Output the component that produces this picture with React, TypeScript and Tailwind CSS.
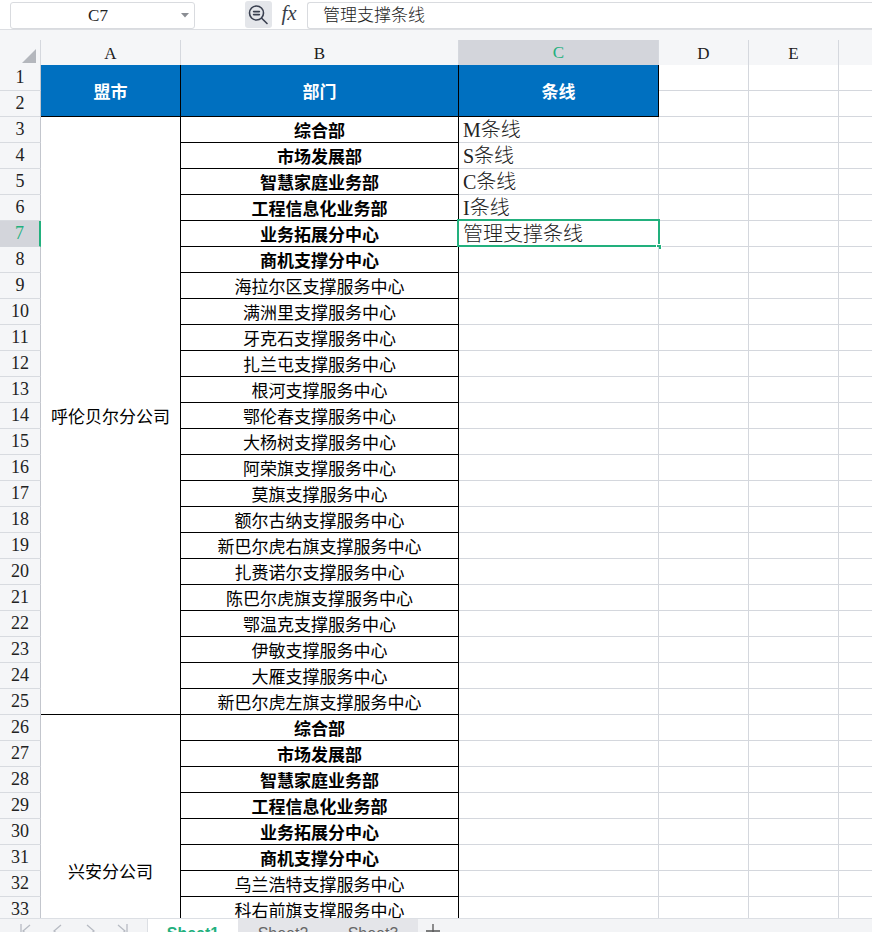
import React from 'react';

const GRID = 'grid grid-cols-[41px_140px_278px_200px_90px_90px_90px] w-max';
const SERIF = "font-['Liberation_Serif','Noto_Sans_CJK_SC',serif]";
const SANS = "font-['Noto_Sans_CJK_SC',sans-serif]";

const HQ = ['综合部', '市场发展部', '智慧家庭业务部', '工程信息化业务部', '业务拓展分中心', '商机支撑分中心'];

const hulunbuir = [
  '海拉尔区支撑服务中心',
  '满洲里支撑服务中心',
  '牙克石支撑服务中心',
  '扎兰屯支撑服务中心',
  '根河支撑服务中心',
  '鄂伦春支撑服务中心',
  '大杨树支撑服务中心',
  '阿荣旗支撑服务中心',
  '莫旗支撑服务中心',
  '额尔古纳支撑服务中心',
  '新巴尔虎右旗支撑服务中心',
  '扎赉诺尔支撑服务中心',
  '陈巴尔虎旗支撑服务中心',
  '鄂温克支撑服务中心',
  '伊敏支撑服务中心',
  '大雁支撑服务中心',
  '新巴尔虎左旗支撑服务中心',
];

const xingan = ['乌兰浩特支撑服务中心', '科右前旗支撑服务中心', '科右中旗支撑服务中心', '扎赉特旗支撑服务中心', '突泉支撑服务中心', '阿尔山支撑服务中心'];

const depts = [
  ...HQ.map((name) => ({ name, bold: true })),
  ...hulunbuir.map((name) => ({ name, bold: false })),
  ...HQ.map((name) => ({ name, bold: true })),
  ...xingan.map((name) => ({ name, bold: false })),
];

const lines: Record<number, string> = { 3: 'M条线', 4: 'S条线', 5: 'C条线', 6: 'I条线', 7: '管理支撑条线' };

const GREEN = '#22b07d';
const TOTAL_ROWS = 37;

function TopBar() {
  return (
    <div className="h-[30px] bg-white border-b border-[#dcdee2] flex items-start shrink-0">
      <div className="ml-[10px] mt-[2px] w-[185px] h-[27px] border border-[#d9dbdf] rounded-[3px] flex items-center bg-white">
        <span className={`flex-1 text-center pl-[4px] text-[17px] text-[#222] ${SERIF}`}>C7</span>
        <svg width="8" height="5" viewBox="0 0 8 5" className="mr-[5px]">
          <path d="M0 0 L8 0 L4 4.5 Z" fill="#8a8d93" />
        </svg>
      </div>
      <div className="ml-[50px] mt-[1px] w-[27px] h-[27px] rounded-[3px] bg-[#e4e6ea] flex items-center justify-center">
        <svg width="27" height="27" viewBox="0 0 27 27" fill="none" stroke="#3a4050" strokeWidth="1.6" strokeLinecap="round">
          <circle cx="11.5" cy="12" r="7" />
          <path d="M16.7 17.2 L22 22.5" />
          <path d="M8.6 10.6 H14.4 M8.6 13.6 H14.4" />
        </svg>
      </div>
      <div className={`ml-[7px] w-[20px] h-[28px] flex items-center justify-center italic text-[21px] text-[#3a3f4a] ${SERIF}`}>
        fx
      </div>
      <div className="ml-[8px] mt-[2px] flex-1 h-[27px] border border-r-0 border-[#d9dbdf] rounded-l-[3px] flex items-center pl-[15px] bg-white">
        <span className={`text-[17px] text-[#222] font-light ${SERIF}`}>管理支撑条线</span>
      </div>
    </div>
  );
}

function ColumnHeaders() {
  const letters = ['A', 'B', 'C', 'D', 'E', 'F'];
  return (
    <div className="bg-[#f5f6f8] pt-[10px] shrink-0">
      <div className={`${GRID} h-[25px]`}>
        <div className="border-r border-b border-r-[#d5d8de] border-b-[#c3c6cd] flex items-end justify-end pr-[4px] pb-[4px]">
          <svg width="14" height="14" viewBox="0 0 14 14">
            <path d="M14 0 L14 14 L0 14 Z" fill="#b4b7bd" />
          </svg>
        </div>
        {letters.map((l) =>
          l === 'C' ? (
            <div
              key={l}
              className={`bg-[#d3d5db] border-r border-r-[#d5d8de] border-b-2 border-b-[#22b07d] flex items-center justify-center text-[17px] text-[#22b07d] ${SERIF}`}
            >
              {l}
            </div>
          ) : (
            <div
              key={l}
              className={`border-r border-b border-r-[#d5d8de] border-b-[#c3c6cd] flex items-center justify-center text-[17px] text-[#1c1c1c] ${SERIF}`}
            >
              {l}
            </div>
          )
        )}
      </div>
    </div>
  );
}

function RowHeader({ n }: { n: number }) {
  if (n === 7) {
    return (
      <div className={`col-start-1 bg-[#d3d5db] border-r-2 border-r-[#22b07d] border-b border-b-[#d3d6dc] flex items-center justify-center text-[18px] text-[#22b07d] ${SERIF}`}>
        {n}
      </div>
    );
  }
  return (
    <div className={`col-start-1 bg-[#f5f6f8] border-r border-b border-r-[#c3c6cd] border-b-[#d8dbe0] flex items-center justify-center text-[18px] text-[#222] ${SERIF}`}>
      {n}
    </div>
  );
}

function Blank() {
  return <div className="border-r border-b border-[#d4d7dd] bg-white" />;
}

function Sheet() {
  const cells: React.ReactNode[] = [];
  for (let r = 1; r <= TOTAL_ROWS; r++) {
    cells.push(<RowHeader key={`h${r}`} n={r} />);
    if (r === 1) {
      ['盟市', '部门', '条线'].map((t) =>
        cells.push(
          <div
            key={t}
            className={`row-span-2 bg-[#0070c0] border-r border-b border-black flex items-center justify-center text-white font-bold text-[17px] ${SANS}`}
          >
            {t}
          </div>
        )
      );
    }
    if (r === 3 || r === 26) {
      cells.push(
        <div
          key={`a${r}`}
          className={`${r === 3 ? 'row-span-23' : 'row-span-12'} bg-white border-r border-b border-black flex items-center justify-center text-[17px] text-black ${SANS}`}
        >
          {r === 3 ? '呼伦贝尔分公司' : '兴安分公司'}
        </div>
      );
    }
    if (r >= 3) {
      const d = depts[r - 3];
      cells.push(
        <div
          key={`b${r}`}
          className={`bg-white border-r border-b border-black flex items-center justify-center text-[17px] text-black ${d.bold ? 'font-bold' : ''} ${SANS}`}
        >
          {d.name}
        </div>
      );
      cells.push(
        <div key={`c${r}`} className="relative bg-white border-r border-b border-[#d4d7dd] flex items-center pl-[4px]">
          <span className={`text-[20px] leading-none text-[#222] font-light ${SERIF}`}>{lines[r] ?? ''}</span>
          {r === 7 && (
            <>
              <div className="absolute -left-[2px] -top-[2px] -right-[2px] -bottom-[1px] border-2 border-[#22b07d]" />
              <div className="absolute -right-[4px] -bottom-[4px] w-[6px] h-[6px] bg-[#22b07d] border border-white" />
            </>
          )}
        </div>
      );
    }
    cells.push(<Blank key={`d${r}`} />, <Blank key={`e${r}`} />, <Blank key={`f${r}`} />);
  }
  return (
    <div className="h-[853px] overflow-hidden bg-white shrink-0">
      <div className={`${GRID} auto-rows-[26px]`}>{cells}</div>
    </div>
  );
}

function Chevron({ d }: { d: string }) {
  return (
    <svg width="16" height="16" viewBox="0 0 16 16" fill="none" stroke="#b7bbc3" strokeWidth="1.3">
      <path d={d} />
    </svg>
  );
}

function TabBar() {
  return (
    <div className="h-[32px] shrink-0 flex bg-[#f3f4f6] border-t border-[#dcdfe4]">
      <div className="w-[148px] border-r border-[#dcdfe4] flex items-start pt-[4px] pl-[18px] gap-[16px]">
        <Chevron d="M3 1 V15 M12 2 L5 8 L12 14" />
        <Chevron d="M11 2 L4 8 L11 14" />
        <Chevron d="M5 2 L12 8 L5 14" />
        <Chevron d="M4 2 L11 8 L4 14 M13 1 V15" />
      </div>
      <div className={`w-[90px] bg-white flex justify-center pt-[3px] text-[16px] font-bold text-[#22b07d] ${"font-['Liberation_Sans',sans-serif]"}`}>
        Sheet1
      </div>
      <div className="flex bg-[#e4e5e9]">
        <div className="w-[90px] flex justify-center pt-[3px] text-[16px] text-[#666] font-['Liberation_Sans',sans-serif]">Sheet2</div>
        <div className="w-[90px] flex justify-center pt-[3px] text-[16px] text-[#666] font-['Liberation_Sans',sans-serif]">Sheet3</div>
      </div>
      <div className="ml-[7px] pt-[4px]">
        <svg width="16" height="16" viewBox="0 0 16 16" stroke="#555" strokeWidth="1.3">
          <path d="M8 1 V15 M1 8 H15" />
        </svg>
      </div>
    </div>
  );
}

export default function App() {
  return (
    <div className="w-[872px] h-[932px] overflow-hidden flex flex-col bg-white">
      <TopBar />
      <ColumnHeaders />
      <Sheet />
      <TabBar />
    </div>
  );
}
